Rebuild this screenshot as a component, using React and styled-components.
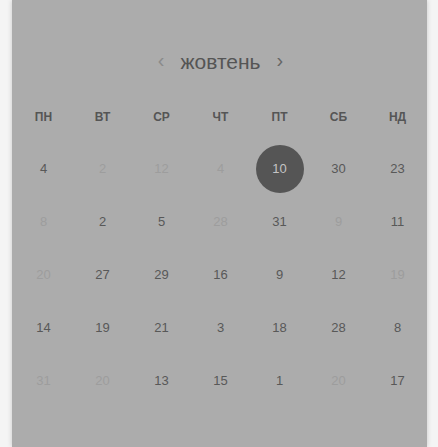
import React from 'react';
import styled, {createGlobalStyle} from 'styled-components';

const GlobalStyle = createGlobalStyle`
  html, body {
    margin: 0;
    padding: 0;
    background: #f4f4f4;
    font-family: "Liberation Sans", Arial, sans-serif;
  }
`

const weekDays = ['пн', 'вт', 'ср', 'чт', 'пт', 'сб', 'нд']

// [day, faded, selected]
const weeks = [
    [[4], [2, 1], [12, 1], [4, 1], [10, 0, 1], [30], [23]],
    [[8, 1], [2], [5], [28, 1], [31], [9, 1], [11]],
    [[20, 1], [27], [29], [16], [9], [12], [19, 1]],
    [[14], [19], [21], [3], [18], [28], [8]],
    [[31, 1], [20, 1], [13], [15], [1], [20, 1], [17]],
]

const App = () => {
    return (
        <>
            <GlobalStyle/>
            <Page>
                <Panel>
                    <MonthBar>
                        <Arrow $dim>‹</Arrow>
                        <MonthName>жовтень</MonthName>
                        <Arrow>›</Arrow>
                    </MonthBar>
                    <Grid>
                        {weekDays.map(d => (
                            <WeekDay key={d}>{d}</WeekDay>
                        ))}
                        {weeks.map((week, i) => week.map(([day, faded, selected], j) => (
                            <DayCell key={i + '-' + j}>
                                <Day $faded={faded} $selected={selected}>{day}</Day>
                            </DayCell>
                        )))}
                    </Grid>
                </Panel>
            </Page>
        </>
    )
}

export default App

const Page = styled.div`
  height: 447px;
  padding-left: 12px;
  overflow: hidden;
`
const Panel = styled.div`
  width: 415px;
  height: 100%;
  background: #acacac;
  box-shadow: 0 0 5px rgba(0, 0, 0, 0.18);
  padding-top: 45px;
  box-sizing: border-box;
`
const MonthBar = styled.div`
  display: flex;
  justify-content: center;
  align-items: center;
  gap: 16px;
  height: 36px;
  margin-bottom: 10px;
  padding-left: 2px;
`
const MonthName = styled.div`
  font-size: 21px;
  color: #555;
  padding-bottom: 2px;
`
const Arrow = styled.span`
  font-size: 20px;
  color: ${props => props.$dim ? '#8a8a8a' : '#666'};
  padding-bottom: 6px;
`
const Grid = styled.div`
  display: grid;
  grid-template-columns: repeat(7, 1fr);
  grid-template-rows: 51px repeat(5, 53px);
  padding-left: 2px;
`
const WeekDay = styled.div`
  display: flex;
  justify-content: center;
  align-items: center;
  font-size: 12px;
  font-weight: bold;
  text-transform: uppercase;
  color: #555;
`
const DayCell = styled.div`
  display: flex;
  justify-content: center;
  align-items: center;
`
const Day = styled.div`
  width: 48px;
  height: 48px;
  border-radius: 50%;
  display: flex;
  justify-content: center;
  align-items: center;
  font-size: 13px;
  color: ${props => props.$selected ? '#c4c4c4' : props.$faded ? '#9d9d9d' : '#585858'};
  background: ${props => props.$selected ? '#555' : 'transparent'};
`
